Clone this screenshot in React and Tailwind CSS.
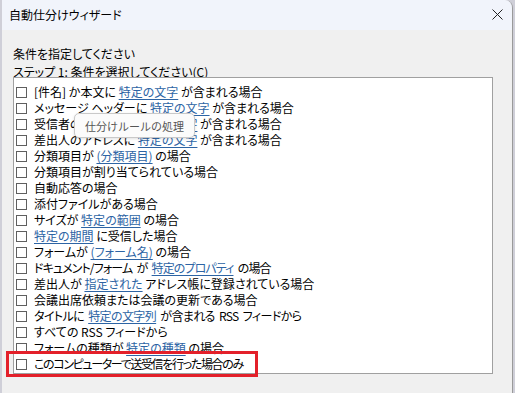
import React from "react";

const L = ({ children }) => (
  <span className="text-[#2d64a4] underline underline-offset-[2px] decoration-[1px]">{children}</span>
);

const rows = [
  { c: <>[件名] か本文に <L>特定の文字</L> が含まれる場合</> },
  { c: <>メッセージ ヘッダーに <L>特定の文字</L> が含まれる場合</> },
  { c: <>受信者のアドレスに <L>特定の文字</L> が含まれる場合</> },
  { c: <>差出人のアドレスに <L>特定の文字</L> が含まれる場合</> },
  { c: <>分類項目が <L>(分類項目)</L> の場合</> },
  { c: <>分類項目が割り当てられている場合</> },
  { c: <>自動応答の場合</> },
  { c: <>添付ファイルがある場合</> },
  { c: <>サイズが <L>特定の範囲</L> の場合</> },
  { c: <><L>特定の期間</L> に受信した場合</> },
  { c: <>フォームが <L>(フォーム名)</L> の場合</> },
  { c: <>ドキュメント/フォーム が <L>特定のプロパティ</L> の場合</>, t: "tracking-[-0.9px] [word-spacing:2.5px]" },
  { c: <>差出人が <L>指定された</L> アドレス帳に登録されている場合</> },
  { c: <>会議出席依頼または会議の更新である場合</> },
  { c: <>タイトルに <L>特定の文字列</L> が含まれる RSS フィードから</>, t: "tracking-[-0.6px] [word-spacing:2px]" },
  { c: <>すべての RSS フィードから</> },
  { c: <>フォームの種類が <L>特定の種類</L> の場合</> },
  { c: <>このコンピューターで送受信を行った場合のみ</>, t: "tracking-[-1.35px]" },
];

export default function App() {
  return (
    <div
      className="relative w-[515px] h-[393px] overflow-hidden bg-[#cfcfd8] text-black text-[12px] whitespace-pre"
      style={{ fontFamily: '"Noto Sans CJK JP", "Noto Sans", sans-serif' }}
    >
      <div className="ml-[2px] w-[511px] h-[393px] flex flex-col border-r border-[#9a9a9a] rounded-tr-[8px] overflow-hidden [font-feature-settings:'palt']">
        <div className="h-[30px] shrink-0 bg-[#f1f4fb] flex items-center justify-between pl-[7px] pr-[9px]">
          <span className="leading-[16px]">自動仕分けウィザード</span>
          <svg width="11" height="11" viewBox="0 0 11 11" className="mt-[-1px]">
            <path d="M0.5 0.5 L10.5 10.5 M10.5 0.5 L0.5 10.5" stroke="#222" strokeWidth="1" fill="none" />
          </svg>
        </div>
        <div className="flex-1 bg-[#f0f0f0] pl-[11px] flex flex-col">
          <div className="mt-[16px] h-[16px] leading-[16px]">条件を指定してください</div>
          <div className="mt-[2px] h-[13px] leading-[16px]">ステップ 1: 条件を選択してください(C)</div>
          <div className="w-[480px] h-[297px] border border-[#a0a0a0] bg-white pt-[6px] flex flex-col">
            {rows.map((r, i) => (
              <div key={i} className="h-[16px] flex items-center shrink-0">
                <div className="ml-[2px] w-[11px] h-[11px] border border-[#5f5f5f] bg-white shrink-0" />
                <div className={"ml-[7px] leading-[16px] " + (r.t || "")}>{r.c}</div>
              </div>
            ))}
          </div>
        </div>
      </div>

      <div className="absolute left-[74px] top-[113px] w-[121px] h-[25px] rounded-[5px] border border-[#c9c9c9] bg-[#fbfbfb] shadow-[0_1px_3px_rgba(0,0,0,0.12)] flex items-center justify-center text-[#555] text-[11px] leading-[16px]">
        仕分けルールの処理
      </div>

      <div className="absolute left-[6px] top-[351px] w-[252px] h-[26px] border-[3px] border-[#e3202a]" />
    </div>
  );
}
